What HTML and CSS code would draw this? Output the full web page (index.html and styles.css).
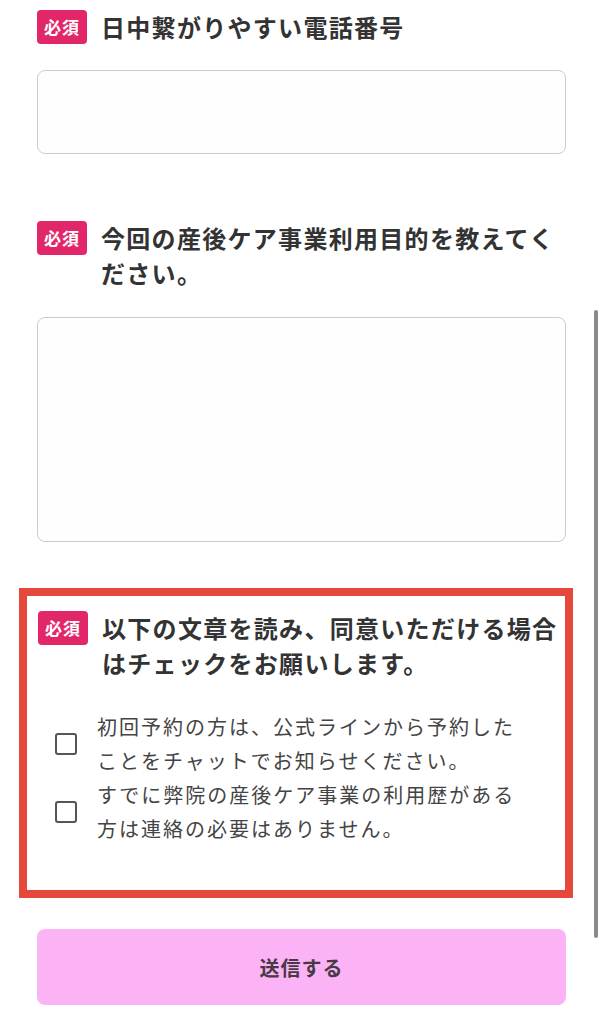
FILE: index.html
```html
<!DOCTYPE html>
<html lang="ja">
<head>
<meta charset="utf-8">
<title>フォーム</title>
<link rel="stylesheet" href="styles.css">
</head>
<body>
<main class="form">
  <section class="field field-tel">
    <div class="field-head">
      <span class="badge">必須</span>
      <h2 class="field-title">日中繋がりやすい電話番号</h2>
    </div>
    <input class="text-input" type="text">
  </section>

  <section class="field field-purpose">
    <div class="field-head">
      <span class="badge">必須</span>
      <h2 class="field-title">今回の産後ケア事業利用目的を教えてください。</h2>
    </div>
    <textarea class="text-area"></textarea>
  </section>

  <section class="field agree-box">
    <div class="field-head">
      <span class="badge">必須</span>
      <h2 class="field-title">以下の文章を読み、同意いただける場合はチェックをお願いします。</h2>
    </div>
    <div class="options">
      <label class="option">
        <input class="check" type="checkbox">
        <span class="option-text">初回予約の方は、公式ラインから予約したことをチャットでお知らせください。</span>
      </label>
      <label class="option">
        <input class="check" type="checkbox">
        <span class="option-text">すでに弊院の産後ケア事業の利用歴がある方は連絡の必要はありません。</span>
      </label>
    </div>
  </section>

  <button class="submit" type="button">送信する</button>
</main>
<div class="scroll-indicator"></div>
</body>
</html>
```

FILE: styles.css
```css
* {
  box-sizing: border-box;
}

html, body {
  margin: 0;
  padding: 0;
  background: #ffffff;
}

body {
  font-family: "Noto Sans CJK JP", "Noto Sans", sans-serif;
  color: #333333;
  width: 603px;
  height: 1024px;
  overflow: hidden;
}

.form {
  width: 529px;
  margin-left: 37px;
  padding-top: 9px;
  display: flex;
  flex-direction: column;
}

.field {
  display: flex;
  flex-direction: column;
}

.field-head {
  display: flex;
  align-items: flex-start;
  gap: 14px;
}

.badge {
  flex: none;
  width: 50px;
  height: 34px;
  margin-top: 1px;
  border-radius: 4px;
  background: #e1266a;
  color: #ffffff;
  font-size: 17px;
  font-weight: 700;
  line-height: 34px;
  text-align: center;
  letter-spacing: 1px;
}

.field-title {
  margin: 0;
  font-size: 24px;
  font-weight: 700;
  line-height: 35px;
  letter-spacing: 1.3px;
  color: #333333;
}

.text-input {
  display: block;
  margin-top: 26px;
  width: 529px;
  height: 84px;
  border: 1.5px solid #cccccc;
  border-radius: 8px;
  background: #fefefe;
}

.field-purpose {
  margin-top: 66px;
}

.text-area {
  display: block;
  margin-top: 27px;
  width: 529px;
  height: 225px;
  border: 1.5px solid #cccccc;
  border-radius: 8px;
  background: #fefefe;
  resize: none;
}

.agree-box {
  margin: 46px -7px 0 -18px;
  border: 8px solid #e5493c;
  padding: 14px 0 44px 11px;
}

.options {
  margin-top: 30px;
  margin-left: 17px;
  display: flex;
  flex-direction: column;
}

.option {
  display: flex;
  align-items: center;
  gap: 20px;
}

.check {
  appearance: none;
  -webkit-appearance: none;
  flex: none;
  margin: 0;
  width: 22px;
  height: 22px;
  border: 2.5px solid #555555;
  border-radius: 3px;
  background: #ffffff;
}

.option-text {
  width: 432px;
  font-size: 20px;
  line-height: 34px;
  letter-spacing: 2px;
  color: #444444;
}

.submit {
  margin-top: 31px;
  width: 529px;
  height: 76px;
  border: none;
  border-radius: 8px;
  background: #fcb3f5;
  color: #473a45;
  font-family: "Noto Sans CJK JP", "Noto Sans", sans-serif;
  font-size: 20px;
  font-weight: 700;
  letter-spacing: 1px;
}

.scroll-indicator {
  position: absolute;
  left: 594px;
  top: 310px;
  width: 4px;
  height: 628px;
  border-radius: 2px;
  background: #8a8a8a;
}
```
